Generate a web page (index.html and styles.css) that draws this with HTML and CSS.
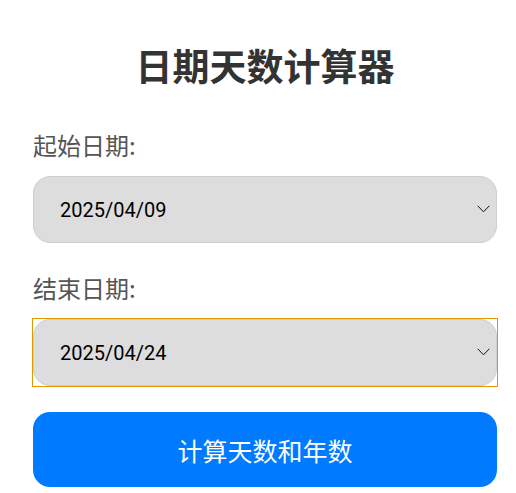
FILE: index.html
```html
<!DOCTYPE html>
<html lang="zh-CN">
<head>
<meta charset="utf-8">
<title>日期天数计算器</title>
<link rel="stylesheet" href="styles.css">
</head>
<body>
<main class="calc">
  <h1 class="title">日期天数计算器</h1>
  <div class="field">
    <label class="label" for="start">起始日期:</label>
    <div class="select-wrap">
      <select id="start" class="select"><option>2025/04/09</option></select>
      <svg class="chev" width="13" height="8" viewBox="0 0 13 8"><path d="M0.7 0.8 L6.5 6.8 L12.3 0.8" fill="none" stroke="#111" stroke-width="1"/></svg>
    </div>
  </div>
  <div class="field last">
    <label class="label" for="end">结束日期:</label>
    <div class="select-wrap focused">
      <select id="end" class="select"><option>2025/04/24</option></select>
      <svg class="chev" width="13" height="8" viewBox="0 0 13 8"><path d="M0.7 0.8 L6.5 6.8 L12.3 0.8" fill="none" stroke="#111" stroke-width="1"/></svg>
    </div>
  </div>
  <button class="btn" type="button">计算天数和年数</button>
</main>
</body>
</html>
```
FILE: styles.css
```css
html, body {
  margin: 0;
  padding: 0;
  background: #fff;
}
body {
  font-family: Roboto, "Noto Sans CJK SC", sans-serif;
}
.calc {
  width: 464px;
  padding: 42px 0 0 33px;
  display: flex;
  flex-direction: column;
}
.title {
  margin: 0 0 40px;
  font-size: 37px;
  line-height: 46px;
  font-weight: 700;
  color: #333;
  text-align: center;
  font-family: "Noto Sans CJK SC", sans-serif;
}
.field {
  display: flex;
  flex-direction: column;
  margin-bottom: 28px;
}
.field.last {
  margin-bottom: 26px;
}
.label {
  font-size: 24px;
  line-height: 34px;
  color: #555;
  margin-bottom: 14px;
  font-family: "Noto Sans CJK SC", sans-serif;
}
.select-wrap {
  position: relative;
  height: 67px;
}
.select-wrap.focused {
  outline: 1px solid #e59700;
}
.select {
  -webkit-appearance: none;
  appearance: none;
  width: 100%;
  height: 67px;
  box-sizing: border-box;
  margin: 0;
  padding: 0 0 0 26px;
  border: 1px solid #cfcfcf;
  border-radius: 17px;
  background: #dddddd;
  font-family: Roboto, sans-serif;
  font-size: 20px;
  color: #000;
  outline: none;
}
.chev {
  position: absolute;
  right: 7px;
  top: 29px;
  pointer-events: none;
}
.btn {
  height: 75px;
  margin: 0;
  border: none;
  border-radius: 17px;
  background: #007bff;
  color: #fff;
  font-family: "Noto Sans CJK SC", sans-serif;
  font-size: 25px;
  padding: 0;
}
```
